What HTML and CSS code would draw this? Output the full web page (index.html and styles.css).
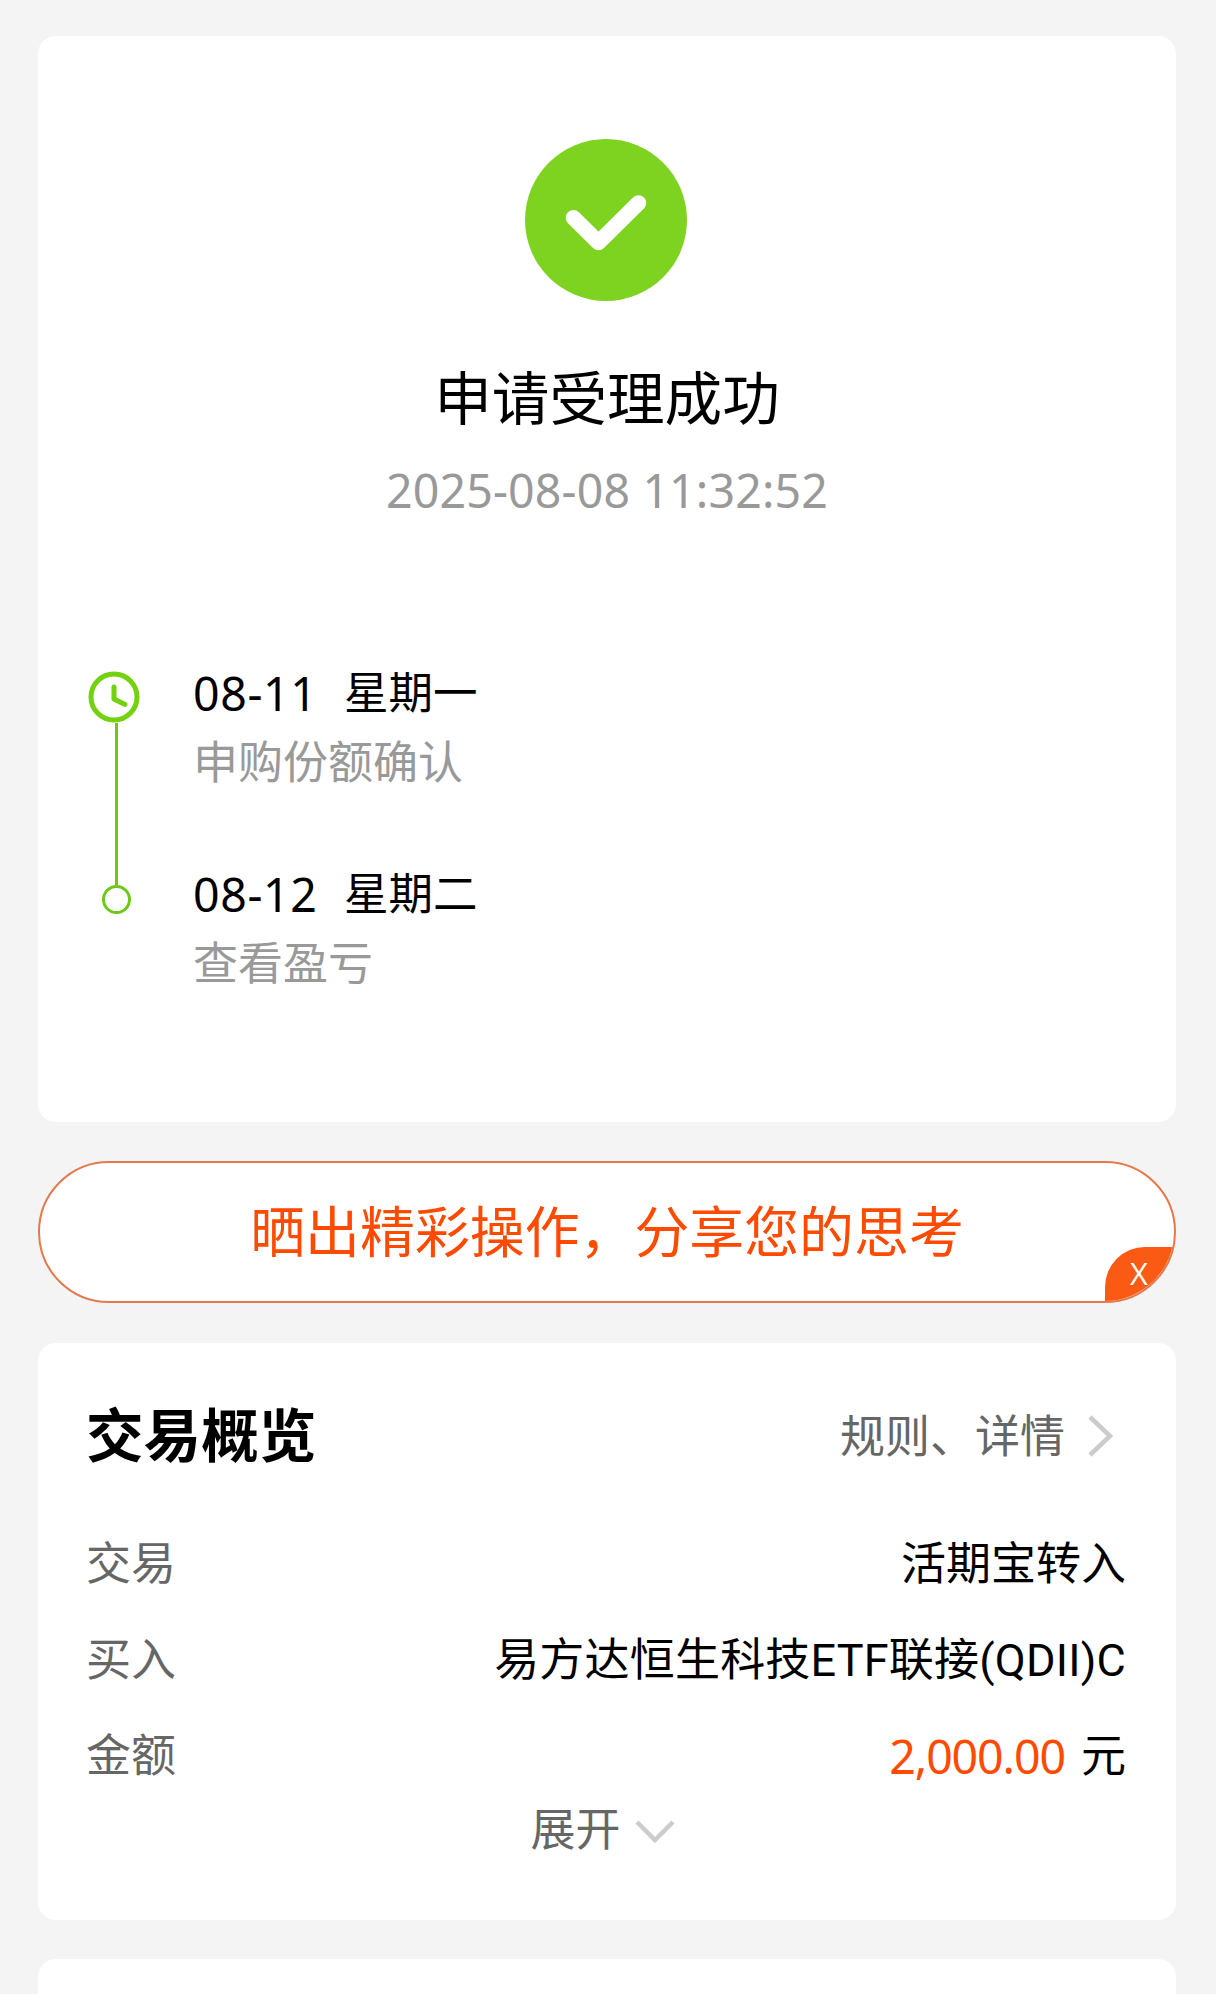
FILE: index.html
```html
<!DOCTYPE html>
<html lang="zh-CN">
<head>
  <meta charset="UTF-8">
  <title>申请受理成功</title>
  <link rel="stylesheet" href="styles.css">
</head>
<body>
  <div class="card result">
    <svg class="success-icon" viewBox="0 0 162 162">
      <circle cx="81" cy="81" r="81" fill="#7ed321"/>
      <path d="M48.5 78.7 L73.5 103.5 L113.5 64" fill="none" stroke="#fff" stroke-width="15.5" stroke-linecap="round" stroke-linejoin="round"/>
    </svg>
    <h1>申请受理成功</h1>
    <p class="time">2025-08-08 11:32:52</p>

    <div class="timeline">
      <div class="axis">
        <svg class="clock" viewBox="0 0 52 52">
          <circle cx="26" cy="26" r="23" fill="none" stroke="#73d20d" stroke-width="5"/>
          <path d="M26 16 V28 L37 33.5" fill="none" stroke="#73d20d" stroke-width="5" stroke-linecap="round" stroke-linejoin="round"/>
        </svg>
        <div class="line"></div>
        <div class="dot"></div>
      </div>
      <div class="steps">
        <div class="step">
          <div class="date"><span class="day">08-11</span><span>星期一</span></div>
          <div class="desc">申购份额确认</div>
        </div>
        <div class="step">
          <div class="date"><span class="day">08-12</span><span>星期二</span></div>
          <div class="desc">查看盈亏</div>
        </div>
      </div>
    </div>
  </div>

  <div class="share">
    <span class="share-text">晒出精彩操作，分享您的思考</span>
    <span class="close">X</span>
  </div>

  <div class="card overview">
    <div class="overview-head">
      <h2>交易概览</h2>
      <div class="rules">
        <span>规则、详情</span>
        <svg class="arrow-right" viewBox="0 0 26 42">
          <path d="M2 2 L22 21 L2 40" fill="none" stroke="#ccc" stroke-width="4.5"/>
        </svg>
      </div>
    </div>
    <div class="row">
      <span class="label">交易</span>
      <span>活期宝转入</span>
    </div>
    <div class="row">
      <span class="label">买入</span>
      <span class="fund">易方达恒生科技ETF联接(QDII)C</span>
    </div>
    <div class="row">
      <span class="label">金额</span>
      <span class="value"><span class="amount">2,000.00</span><span>元</span></span>
    </div>
    <div class="expand">
      <span>展开</span>
      <svg class="arrow-down" viewBox="0 0 40 24">
        <path d="M2 2 L20 20 L38 2" fill="none" stroke="#ccc" stroke-width="4.5"/>
      </svg>
    </div>
  </div>

  <div class="card next"></div>
</body>
</html>
```
FILE: styles.css
```css
* {
  box-sizing: border-box;
}
body {
  margin: 0;
  padding: 36px 40px 0 38px;
  height: 1994px;
  overflow: hidden;
  background: #f4f4f4;
  color: #000;
  font-family: Roboto, "Noto Sans CJK SC", sans-serif;
  font-size: 45px;
}
h1, h2, p {
  margin: 0;
}
.card {
  background: #fff;
  border-radius: 18px;
}
.result {
  height: 1086px;
  padding-top: 103px;
}
.success-icon {
  display: block;
  width: 162px;
  height: 162px;
  margin: 0 auto;
  position: relative;
  left: -1px;
}
.result h1 {
  margin-top: 65px;
  height: 70px;
  line-height: 70px;
  font-size: 57.6px;
  font-weight: 400;
  text-align: center;
}
.time {
  margin-top: 24px;
  height: 60px;
  line-height: 60px;
  font-family: "Noto Sans", sans-serif;
  font-size: 46.5px;
  letter-spacing: 0.15px;
  text-align: center;
  color: #999;
}
.timeline {
  display: flex;
  margin-top: 148px;
  padding-left: 50px;
}
.axis {
  display: flex;
  flex-direction: column;
  align-items: center;
  width: 57px;
  padding-top: 3px;
}
.clock {
  width: 52px;
  height: 52px;
  margin-right: 5px;
}
.line {
  width: 3px;
  height: 162px;
  background: #6cc91a;
}
.dot {
  width: 29px;
  height: 29px;
  border: 3px solid #6cc91a;
  border-radius: 50%;
}
.steps {
  padding-left: 48px;
}
.step {
  height: 201px;
}
.date {
  display: flex;
  height: 50px;
  line-height: 53px;
  font-size: 44.5px;
}
.day {
  width: 151px;
  line-height: 51px;
  font-family: "Noto Sans", sans-serif;
  font-size: 46.5px;
  letter-spacing: 0.6px;
}
.desc {
  margin-top: 21px;
  height: 50px;
  line-height: 50px;
  color: #999;
}
.share {
  display: flex;
  justify-content: center;
  align-items: center;
  position: relative;
  height: 142px;
  margin: 39px 0 40px;
  padding-bottom: 9px;
  border: 2px solid #e4794c;
  border-radius: 71px;
  background: #fff;
  color: #ff4a00;
  font-size: 54.9px;
  overflow: hidden;
}
.close {
  position: absolute;
  right: -1px;
  bottom: 0;
  width: 70px;
  height: 54px;
  padding-left: 25px;
  line-height: 52px;
  border-top-left-radius: 40px;
  background: #fa5a14;
  color: #fff;
  font-family: "Open Sans", sans-serif;
  font-size: 31px;
}
.overview {
  height: 577px;
  padding: 60px 50px 0 48px;
}
.overview-head {
  display: flex;
  justify-content: space-between;
  align-items: center;
  height: 70px;
  margin-bottom: 43px;
}
.overview h2 {
  font-size: 57.6px;
  line-height: 70px;
}
.rules {
  display: flex;
  align-items: center;
  gap: 23px;
  line-height: 70px;
  padding-right: 12px;
  color: #666;
}
.arrow-right {
  width: 26px;
  height: 42px;
  margin-bottom: 5px;
}
.row {
  display: flex;
  justify-content: space-between;
  height: 96px;
  line-height: 97px;
}
.label {
  color: #666;
}
.fund {
  letter-spacing: 0.2px;
}
.value {
  display: flex;
  gap: 16px;
}
.amount {
  line-height: 96px;
  color: #ff4a00;
  font-family: "Noto Sans", sans-serif;
  font-size: 46.5px;
  letter-spacing: -1.1px;
}
.expand {
  display: flex;
  justify-content: center;
  align-items: center;
  gap: 14px;
  height: 54px;
  line-height: 54px;
  padding-right: 7px;
  color: #666;
}
.arrow-down {
  width: 40px;
  height: 24px;
  margin-top: 2px;
}
.next {
  height: 100px;
  margin-top: 39px;
}
```
